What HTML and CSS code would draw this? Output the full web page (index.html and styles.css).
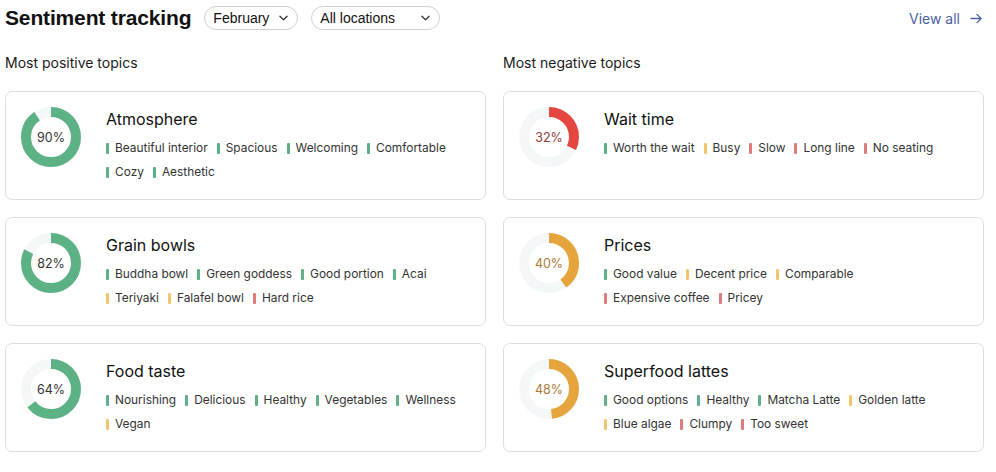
FILE: index.html
```html
<!DOCTYPE html>
<html lang="en">
<head>
<meta charset="utf-8">
<title>Sentiment tracking</title>
<link rel="stylesheet" href="styles.css">
</head>
<body>
<div class="page">
  <header class="header">
    <div class="header-left">
      <h1 class="title">Sentiment tracking</h1>
      <div class="pill pill-month">February <svg class="chev" viewBox="0 0 10 6" width="9" height="6"><path d="M1 1l4 4 4-4" fill="none" stroke="#333" stroke-width="1.4" stroke-linecap="round" stroke-linejoin="round"/></svg></div>
      <div class="pill pill-loc">All locations <svg class="chev" viewBox="0 0 10 6" width="9" height="6"><path d="M1 1l4 4 4-4" fill="none" stroke="#333" stroke-width="1.4" stroke-linecap="round" stroke-linejoin="round"/></svg></div>
    </div>
    <a class="view-all" href="#">View all <svg viewBox="0 0 14 12" width="13" height="11"><path d="M1 6h11M7.5 1.5L12 6l-4.5 4.5" fill="none" stroke="#4f5fa3" stroke-width="1.4" stroke-linecap="round" stroke-linejoin="round"/></svg></a>
  </header>

  <div class="columns">
    <section class="col">
      <h2 class="col-title">Most positive topics</h2>
      <div class="card">
        <div class="donut">
          <svg viewBox="0 0 60 60" width="60" height="60"><circle cx="30" cy="30" r="25" class="track"/><circle cx="30" cy="30" r="25" class="arc green" style="stroke-dasharray: 141.37 157.08"/></svg>
          <span class="pct">90%</span>
        </div>
        <div class="info">
          <div class="topic">Atmosphere</div>
          <div class="tags">
            <span class="tag g">Beautiful interior</span><span class="tag g">Spacious</span><span class="tag g">Welcoming</span><span class="tag g">Comfortable</span><span class="tag g">Cozy</span><span class="tag g">Aesthetic</span>
          </div>
        </div>
      </div>
      <div class="card">
        <div class="donut">
          <svg viewBox="0 0 60 60" width="60" height="60"><circle cx="30" cy="30" r="25" class="track"/><circle cx="30" cy="30" r="25" class="arc green" style="stroke-dasharray: 128.81 157.08"/></svg>
          <span class="pct">82%</span>
        </div>
        <div class="info">
          <div class="topic">Grain bowls</div>
          <div class="tags">
            <span class="tag g">Buddha bowl</span><span class="tag g">Green goddess</span><span class="tag g">Good portion</span><span class="tag g">Acai</span><span class="tag o">Teriyaki</span><span class="tag o">Falafel bowl</span><span class="tag r">Hard rice</span>
          </div>
        </div>
      </div>
      <div class="card">
        <div class="donut">
          <svg viewBox="0 0 60 60" width="60" height="60"><circle cx="30" cy="30" r="25" class="track"/><circle cx="30" cy="30" r="25" class="arc green" style="stroke-dasharray: 100.53 157.08"/></svg>
          <span class="pct">64%</span>
        </div>
        <div class="info">
          <div class="topic">Food taste</div>
          <div class="tags">
            <span class="tag g">Nourishing</span><span class="tag g">Delicious</span><span class="tag g">Healthy</span><span class="tag g">Vegetables</span><span class="tag g">Wellness</span><span class="tag o">Vegan</span>
          </div>
        </div>
      </div>
    </section>

    <section class="col">
      <h2 class="col-title">Most negative topics</h2>
      <div class="card">
        <div class="donut">
          <svg viewBox="0 0 60 60" width="60" height="60"><circle cx="30" cy="30" r="25" class="track"/><circle cx="30" cy="30" r="25" class="arc red" style="stroke-dasharray: 50.27 157.08"/></svg>
          <span class="pct pct-red">32%</span>
        </div>
        <div class="info">
          <div class="topic">Wait time</div>
          <div class="tags">
            <span class="tag g">Worth the wait</span><span class="tag o">Busy</span><span class="tag r">Slow</span><span class="tag r">Long line</span><span class="tag r">No seating</span>
          </div>
        </div>
      </div>
      <div class="card">
        <div class="donut">
          <svg viewBox="0 0 60 60" width="60" height="60"><circle cx="30" cy="30" r="25" class="track"/><circle cx="30" cy="30" r="25" class="arc orange" style="stroke-dasharray: 62.83 157.08"/></svg>
          <span class="pct pct-orange">40%</span>
        </div>
        <div class="info">
          <div class="topic">Prices</div>
          <div class="tags">
            <span class="tag g">Good value</span><span class="tag o">Decent price</span><span class="tag o">Comparable</span><span class="tag r">Expensive coffee</span><span class="tag r">Pricey</span>
          </div>
        </div>
      </div>
      <div class="card">
        <div class="donut">
          <svg viewBox="0 0 60 60" width="60" height="60"><circle cx="30" cy="30" r="25" class="track"/><circle cx="30" cy="30" r="25" class="arc orange" style="stroke-dasharray: 75.4 157.08"/></svg>
          <span class="pct pct-orange">48%</span>
        </div>
        <div class="info">
          <div class="topic">Superfood lattes</div>
          <div class="tags">
            <span class="tag g">Good options</span><span class="tag g">Healthy</span><span class="tag g">Matcha Latte</span><span class="tag o">Golden latte</span><span class="tag o">Blue algae</span><span class="tag r">Clumpy</span><span class="tag r">Too sweet</span>
          </div>
        </div>
      </div>
    </section>
  </div>
</div>
</body>
</html>
```

FILE: styles.css
```css
* { box-sizing: border-box; }

html, body {
  margin: 0;
  padding: 0;
  background: #ffffff;
}

body {
  font-family: Inter, "Liberation Sans", Arial, sans-serif;
  color: #1a1a1a;
}

.page {
  width: 996px;
  padding: 6px 12px 0 5px;
}

.header {
  display: flex;
  align-items: center;
  justify-content: space-between;
  height: 24px;
}

.header-left {
  display: flex;
  align-items: center;
  gap: 13px;
}

.title {
  margin: 0;
  font-size: 21px;
  font-weight: 700;
  color: #111;
  letter-spacing: -0.15px;
  font-family: "Liberation Sans", Arial, sans-serif;
}

.pill {
  display: flex;
  align-items: center;
  justify-content: space-between;
  height: 24px;
  padding: 0 9px 0 8px;
  border: 1px solid #cfcfcf;
  border-radius: 12px;
  font-family: "Liberation Sans", Arial, sans-serif;
  font-size: 14px;
  color: #111;
  background: #fff;
}

.pill-month { width: 94px; }
.pill-loc { width: 129px; }

.chev { display: block; }

.view-all {
  display: flex;
  align-items: center;
  gap: 10px;
  font-size: 14px;
  color: #4f5fa3;
  text-decoration: none;
  margin-right: 1px;
}

.columns {
  display: grid;
  grid-template-columns: 481px 481px;
  column-gap: 17px;
  margin-top: 23px;
}

.col-title {
  margin: 0 0 18px;
  font-size: 14px;
  font-weight: 400;
  line-height: 20px;
  color: #1a1a1a;
}

.card {
  display: flex;
  align-items: flex-start;
  height: 109px;
  margin-bottom: 17px;
  padding: 15px 16px 0 15px;
  border: 1px solid #dedede;
  border-radius: 7px;
  background: #fff;
}

.donut {
  position: relative;
  flex: 0 0 60px;
  width: 60px;
  height: 60px;
}

.donut svg {
  display: block;
  transform: rotate(-90deg);
}

.track {
  fill: none;
  stroke: #f4f7f8;
  stroke-width: 10;
}

.arc {
  fill: none;
  stroke-width: 10;
}

.arc.green { stroke: #5cb285; }
.arc.red { stroke: #e5463f; }
.arc.orange { stroke: #e6a43c; }

.pct {
  position: absolute;
  inset: 0;
  display: flex;
  align-items: center;
  justify-content: center;
  font-size: 12.5px;
  color: #333;
}

.pct-red { color: #8e3a36; }
.pct-orange { color: #a97a3c; }

.info {
  margin-left: 25px;
  padding-top: 1px;
}

.topic {
  font-size: 16px;
  font-weight: 400;
  line-height: 22px;
  color: #111;
}

.tags {
  display: flex;
  flex-wrap: wrap;
  column-gap: 9px;
  margin-top: 6px;
  max-width: 364px;
}

.tag {
  display: inline-flex;
  align-items: center;
  gap: 6px;
  font-size: 11.9px;
  line-height: 24px;
  color: #333;
}

.tag::before {
  content: "";
  display: block;
  width: 3px;
  height: 11px;
  border-radius: 1px;
}

.tag.g::before { background: #5fae86; }
.tag.o::before { background: #f2c46c; }
.tag.r::before { background: #e07b7b; }
```
